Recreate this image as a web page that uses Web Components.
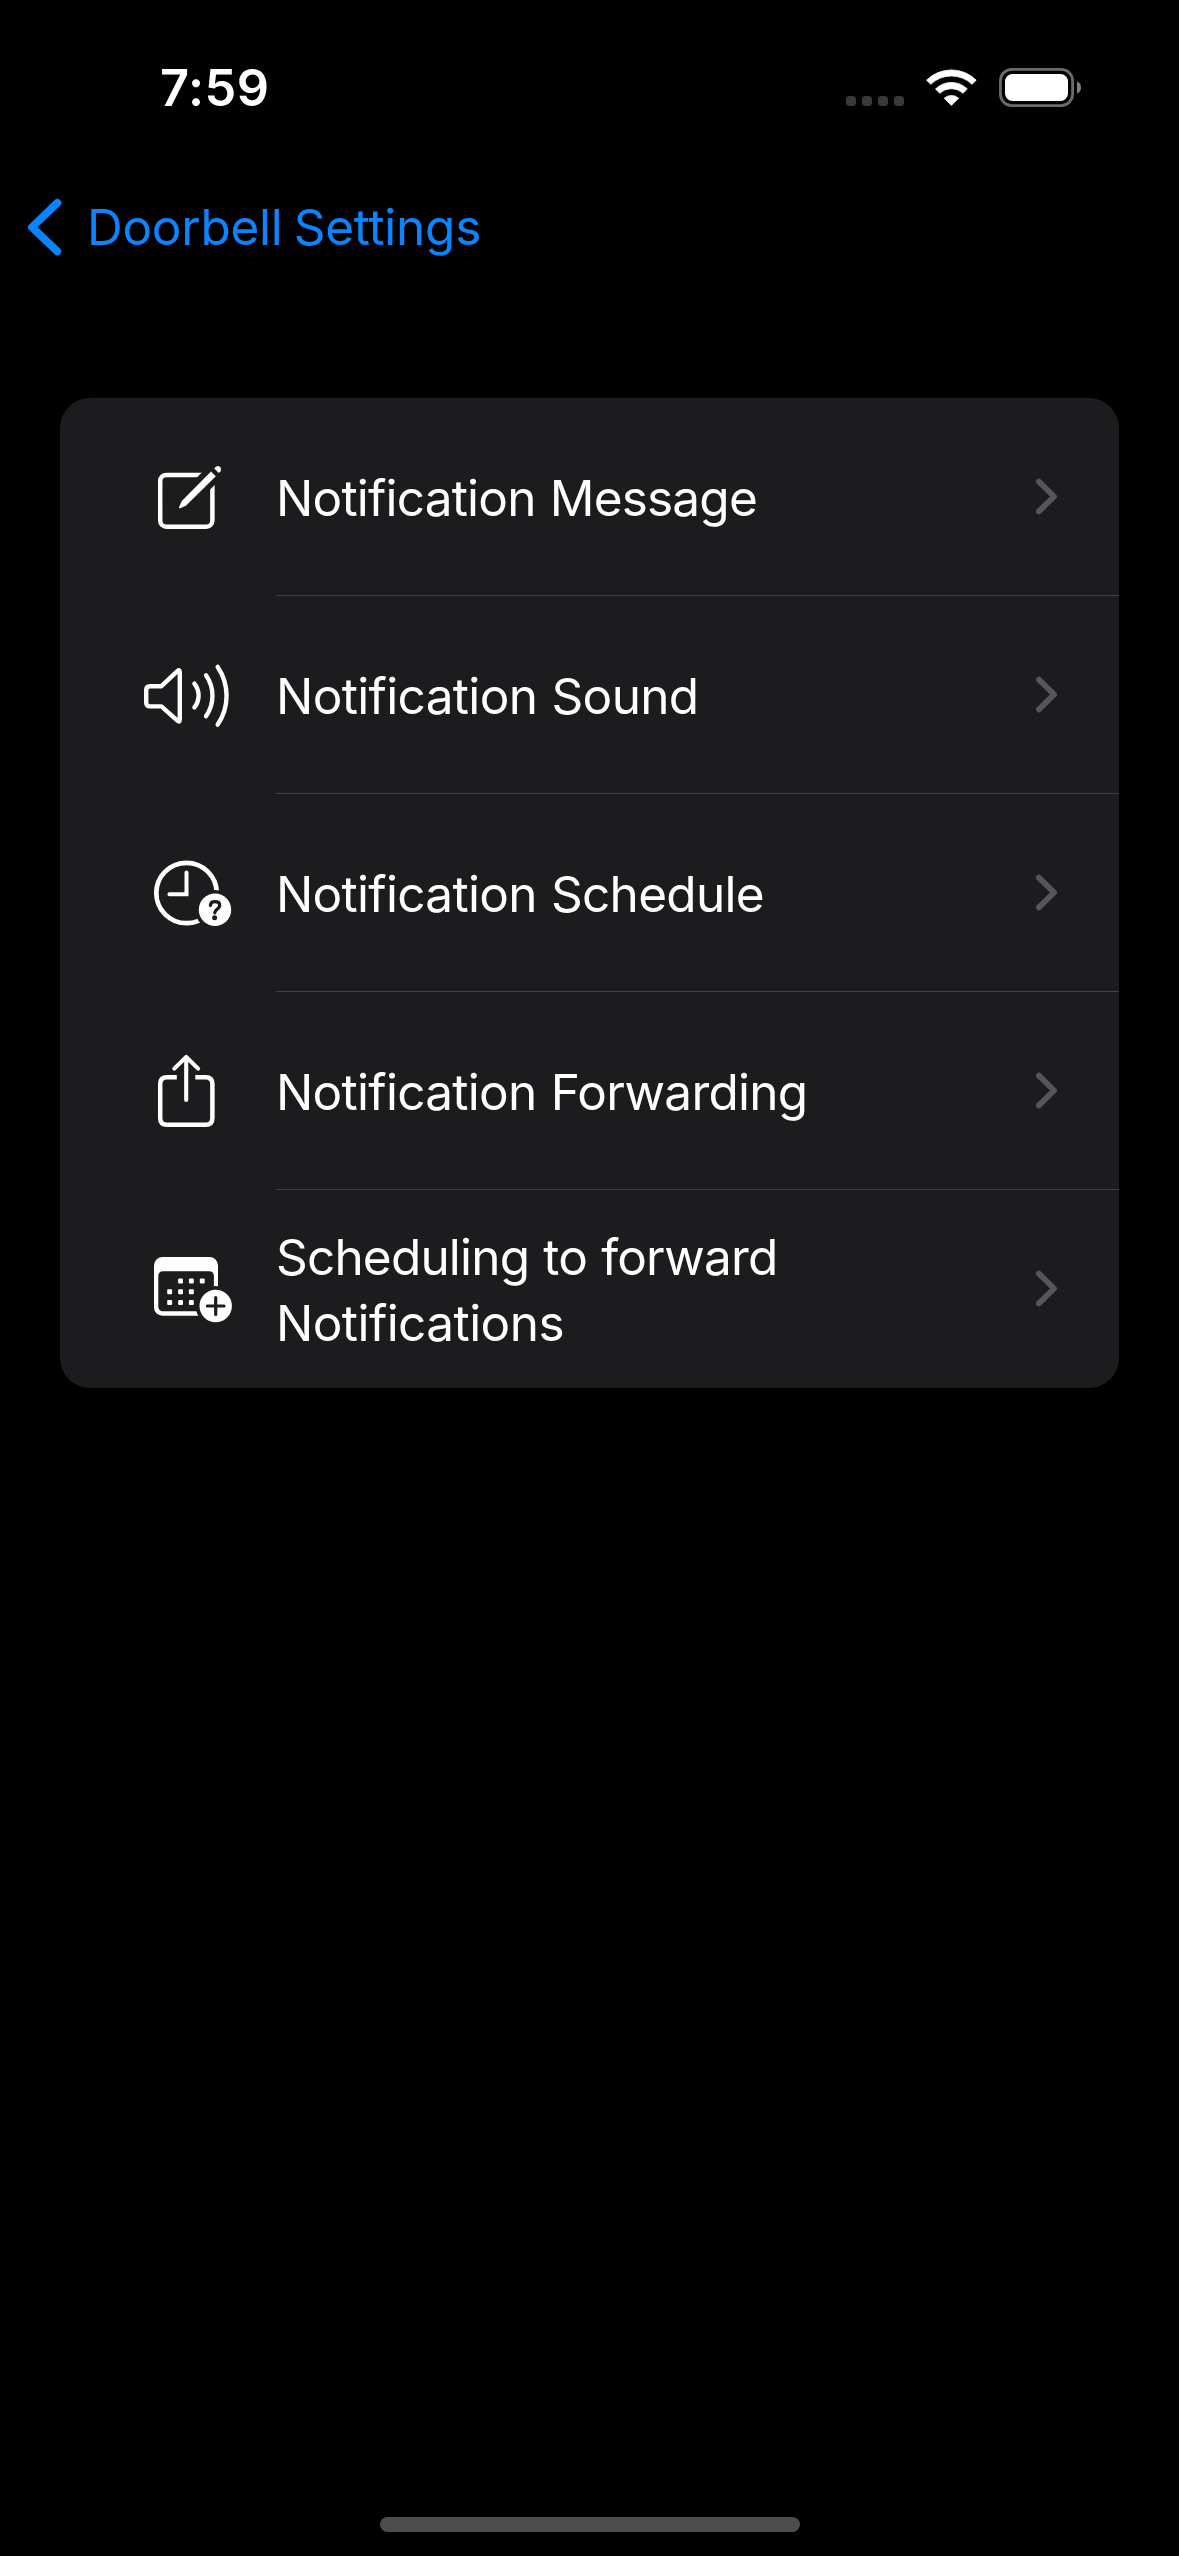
<!DOCTYPE html>
<html lang="en">
<head>
<meta charset="utf-8">
<meta name="viewport" content="width=device-width">
<title>Doorbell Settings</title>
<style>
html,body{margin:0;background:#000}
body{font-family:Inter,"Liberation Sans",sans-serif;color:#fff}
</style>
</head>
<body>
<settings-screen>
  <status-bar slot="status" time="7:59"></status-bar>
  <nav-back slot="nav"><fit-text span="394">Doorbell Settings</fit-text></nav-back>
  <settings-row icon="compose"><fit-text span="481">Notification Message</fit-text></settings-row>
  <settings-row icon="sound"><fit-text span="422.5">Notification Sound</fit-text></settings-row>
  <settings-row icon="clock"><fit-text span="488">Notification Schedule</fit-text></settings-row>
  <settings-row icon="share"><fit-text span="531.5">Notification Forwarding</fit-text></settings-row>
  <settings-row icon="calendar"><fit-text span="501.5">Scheduling to forward</fit-text><fit-text span="288">Notifications</fit-text></settings-row>
</settings-screen>
<script>
const CARD = '#1c1c1e';
const ICONS = {
  compose: [2, `<rect x="30.2" y="34.9" width="52.2" height="51.9" rx="6.2" fill="none" stroke="#fff" stroke-width="4.5"/>
    <path d="M57 60 95 22" stroke="${CARD}" stroke-width="18"/>
    <path d="M49.1 67 51.8 61 81 31.6 85.8 36.3 56.2 65.5 50.3 68.2Q48.6 68.6 49.1 67Z" fill="#fff"/>
    <path d="M84.2 28.6 86 26.8Q88.2 25.2 90.2 27.2 92 29.4 90.6 31.2L88.8 33Z" fill="#fff"/>`],
  sound: [0, `<g fill="none" stroke="#fff" stroke-width="4.4" stroke-linecap="round" stroke-linejoin="round">
    <path d="M20 46.2H31.4L47.4 31.2Q49.8 29 49.8 32.2V79.6Q49.8 82.8 47.4 80.6L31.4 66.4H20Q16.2 66.4 16.2 62.6V50Q16.2 46.2 20 46.2Z"/>
    <path d="M64.4 43.6A19 19 0 0 1 64.4 67.4M76 35.2A35.8 35.8 0 0 1 76 76.2M87.7 26.9A51.4 51.4 0 0 1 87.7 84.6"/></g>`],
  clock: [-2, `<circle cx="56.5" cy="53" r="30.2" fill="none" stroke="#fff" stroke-width="4.7"/>
    <path d="M56.5 32.4V54.3H39.4" fill="none" stroke="#fff" stroke-width="4" stroke-linecap="round"/>
    <circle cx="85" cy="69.8" r="19.8" fill="${CARD}"/><circle cx="85" cy="69.8" r="16.2" fill="#fff"/>
    <path d="M80.4 65.3C80.6 62.8 82.4 61.7 85 61.7 87.9 61.7 89.7 63.2 89.7 65.5 89.7 69.3 84.8 68.8 84.8 72.8" fill="none" stroke="${CARD}" stroke-width="3.3" stroke-linecap="round"/>
    <circle cx="84.6" cy="77.8" r="2.5" fill="${CARD}"/>`],
  share: [-4, `<g fill="none" stroke="#fff"><path d="M46.8 37.3H37Q30.2 37.3 30.2 44.1V78Q30.2 84.8 37 84.8H75.6Q82.4 84.8 82.4 78V44.1Q82.4 37.3 75.6 37.3H65.3" stroke-width="4.5"/>
    <path d="M56.2 17.4V60M44.3 28.6 56.2 17 68.1 28.6" stroke-width="4.1" stroke-linecap="round" stroke-linejoin="round"/></g>`],
  calendar: [-6, `<rect x="24" y="17" width="64" height="58.7" rx="8.5" fill="#fff"/><rect x="28.3" y="31.3" width="55.6" height="40" rx="4.5" fill="${CARD}"/>
    <g fill="#fff">${[[50.5,41],[61.3,41],[72.2,41],[39.6,51.7],[50.5,51.7],[61.3,51.7],[39.6,62.4],[50.5,62.4],[61.3,62.4]].map(([x,y])=>`<rect x="${x-2.4}" y="${y-2.4}" width="4.9" height="4.9" rx="1"/>`).join('')}</g>
    <circle cx="85.7" cy="66" r="20" fill="${CARD}"/><circle cx="85.7" cy="66" r="16.2" fill="#fff"/>
    <path d="M77.4 66H94M85.7 57.6V74.4" stroke="${CARD}" stroke-width="3.2" stroke-linecap="round"/>`]
};

// One line of text whose tracking is adjusted to fill a given advance width.
class FitText extends HTMLElement {
  connectedCallback() {
    const root = this.attachShadow({mode: 'open'});
    root.innerHTML = `<style>:host{display:block;white-space:nowrap}span{display:inline-block}</style><span><slot></slot></span>`;
    const fit = () => {
      const s = root.querySelector('span');
      s.style.letterSpacing = '0px';
      const n = this.textContent.length;
      s.style.letterSpacing = (this.getAttribute('span') - s.getBoundingClientRect().width) / n + 'px';
    };
    fit();
    requestAnimationFrame(fit);
  }
}

class StatusBar extends HTMLElement {
  connectedCallback() {
    this.attachShadow({mode: 'open'}).innerHTML = `<style>
      :host{display:flex;align-items:center;justify-content:space-between;height:175px;padding:0 98px 0 160px;box-sizing:border-box}
      .time{font-size:50.5px;font-weight:600;line-height:60px;padding-top:1px}
      .icons{display:flex;gap:22px;height:39px;align-items:center}
      .dots{display:flex;gap:6px;align-self:flex-end;padding-bottom:1px}
      .dots i{width:10px;height:10px;border-radius:3.5px;background:#3a3a3a}
      svg{display:block}
    </style>
    <div class="time"><fit-text span="109.5">${this.getAttribute('time')}</fit-text></div>
    <div class="icons">
      <div class="dots"><i></i><i></i><i></i><i></i></div>
      <svg width="51" height="39" viewBox="106 18 51 39" fill="#fff" stroke="#fff" stroke-width=".8" stroke-linejoin="round">
        <path d="M106.6 30.2A35 35 0 0 1 156.2 30.2L152 34.3A29.6 29.6 0 0 0 110.8 34.3Z"/>
        <path d="M115.5 39A22.5 22.5 0 0 1 147.3 39L143 43.2A17 17 0 0 0 119.8 43.2Z"/>
        <path d="M124.2 48.2A10.8 10.8 0 0 1 138.6 48.2L131.4 55.4Z"/>
      </svg>
      <svg width="82" height="39" viewBox="0 0 82 39"><rect x="1.4" y="1.4" width="72.2" height="36.2" rx="11.5" fill="none" stroke="#6b6b6b" stroke-width="2.8"/>
        <rect x="6" y="6" width="63" height="27" rx="7.5" fill="#fff"/><path d="M78 13.3Q82 15.3 82 19.5T78 25.7Z" fill="#808080"/></svg>
    </div>`;
  }
}

class NavBack extends HTMLElement {
  connectedCallback() {
    this.attachShadow({mode: 'open'}).innerHTML = `<style>
      :host{display:flex;align-items:center;gap:25px;height:103px;padding-left:28px;color:#0a84ff;font-size:49.5px;line-height:66px;word-spacing:-2.5px}
      svg{display:block}
    </style>
    <svg width="34" height="58" viewBox="0 0 34 58" fill="none" stroke="currentColor" stroke-width="7.8" stroke-linecap="round" stroke-linejoin="round"><path d="M29.3 4.9 4 29.2 29.3 53.4"/></svg>
    <slot></slot>`;
  }
}

class SettingsRow extends HTMLElement {
  connectedCallback() {
    const [y, art] = ICONS[this.getAttribute('icon')];
    this.attachShadow({mode: 'open'}).innerHTML = `<style>
      :host{display:flex;height:198px;padding-left:70px;gap:26px;font-size:49.5px;line-height:66px}
      svg{display:block;flex:none;align-self:center}
      .body{flex:1;display:flex;align-items:center;justify-content:space-between;padding-right:62px;border-bottom:1px solid #414144}
      :host(:last-of-type) .body{border-color:transparent}
      .label{padding-top:2px;word-spacing:1px}
    </style>
    <svg width="120" height="110" viewBox="0 ${y} 120 110">${art}</svg>
    <div class="body"><div class="label"><slot></slot></div>
    <svg width="21" height="37" viewBox="0 0 21 37" fill="none" stroke="#565658" stroke-width="5.8" stroke-linecap="round" stroke-linejoin="round"><path d="M2.9 3.6 18.1 18.5 2.9 33.4"/></svg></div>`;
  }
}

class SettingsScreen extends HTMLElement {
  connectedCallback() {
    this.attachShadow({mode: 'open'}).innerHTML = `<style>
      :host{display:flex;flex-direction:column;width:1179px;height:2556px;background:#000;overflow:hidden}
      .card{margin:120px 60px 0;background:${CARD};border-radius:30px;overflow:hidden}
      .home{width:420px;height:15px;border-radius:8px;background:#4d4d4d;margin:auto auto 24px 380px}
    </style>
    <slot name="status"></slot><slot name="nav"></slot>
    <div class="card"><slot></slot></div><div class="home"></div>`;
  }
}
customElements.define('fit-text', FitText);
customElements.define('status-bar', StatusBar);
customElements.define('nav-back', NavBack);
customElements.define('settings-row', SettingsRow);
customElements.define('settings-screen', SettingsScreen);
</script>
</body>
</html>
